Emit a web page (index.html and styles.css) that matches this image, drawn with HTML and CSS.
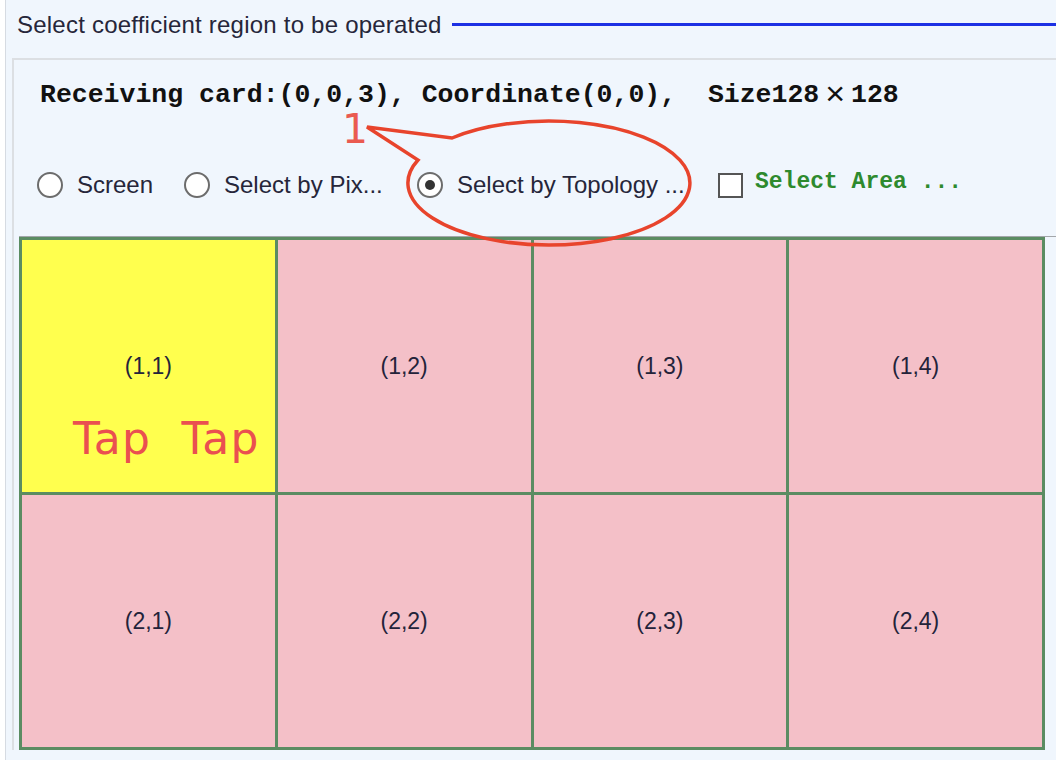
FILE: index.html
```html
<!DOCTYPE html>
<html lang="en">
<head>
<meta charset="utf-8">
<title>Coefficient region</title>
<link rel="stylesheet" href="styles.css">
</head>
<body>
<div class="frame">
  <div class="legend">
    <span class="legend-title">Select coefficient region to be operated</span>
    <span class="legend-rule"></span>
  </div>

  <div class="panel">
    <div class="info">Receiving card:(0,0,3), Coordinate(0,0),  Size128<span class="wide">×</span>128</div>

    <div class="options">
      <label class="opt"><span class="radio"></span><span class="opt-text">Screen</span></label>
      <label class="opt"><span class="radio"></span><span class="opt-text">Select by Pix...</span></label>
      <label class="opt"><span class="radio on"></span><span class="opt-text">Select by Topology ...</span></label>
      <label class="opt"><span class="box"></span><span class="area">Select Area ...</span></label>
    </div>

    <div class="topo">
      <div class="grid">
        <div class="cell picked">(1,1)<span class="tap">Tap  Tap</span></div>
        <div class="cell">(1,2)</div>
        <div class="cell">(1,3)</div>
        <div class="cell">(1,4)</div>
        <div class="cell">(2,1)</div>
        <div class="cell">(2,2)</div>
        <div class="cell">(2,3)</div>
        <div class="cell">(2,4)</div>
      </div>
    </div>
  </div>

  <svg class="callout" width="1056" height="760" viewBox="0 0 1056 760">
    <path d="M367 127 L452 138 A141 62 0 1 1 418 160 Z" fill="none" stroke="#e8442c" stroke-width="3.5" stroke-linejoin="miter"/>
    <text x="342" y="143" class="callout-num">1</text>
  </svg>
</div>
</body>
</html>
```

FILE: styles.css
```css
* {
  box-sizing: border-box;
}

html, body {
  margin: 0;
  padding: 0;
  background: #ffffff;
}

body {
  width: 1056px;
  height: 760px;
  overflow: hidden;
  font-family: "Liberation Sans", Arial, sans-serif;
  color: #222233;
}

.frame {
  position: relative;
  margin-left: 5px;
  height: 760px;
  border-left: 1px solid #d6dbe2;
  background: #f0f6fd;
}

/* group title with the rule running to the right */
.legend {
  display: flex;
  align-items: center;
  height: 50px;
  padding-left: 11px;
}

.legend-title {
  font-size: 24px;
  letter-spacing: 0.22px;
  color: #26263a;
  white-space: nowrap;
}

.legend-rule {
  flex: 1;
  height: 3px;
  margin-left: 10px;
  margin-top: -2px;
  background: #1c30e4;
}

.panel {
  margin-top: 8px;
  margin-left: 6px;
  border-top: 2px solid #dcdfe3;
  border-left: 2px solid #dcdfe3;
  padding-top: 19px;
}

.info {
  height: 32px;
  line-height: 32px;
  padding-left: 26px;
  font-family: "Liberation Mono", "Courier New", monospace;
  font-weight: bold;
  font-size: 26.5px;
  color: #111111;
  white-space: pre;
}

.info .wide {
  display: inline-block;
  width: 31.8px;
  text-align: center;
  font-family: "Liberation Sans", Arial, sans-serif;
  font-weight: normal;
  font-size: 34px;
  line-height: 0;
  vertical-align: -3px;
}

.options {
  display: grid;
  grid-template-columns: 147px 233px 301px auto;
  align-items: center;
  height: 40px;
  margin-top: 54px;
  padding-left: 23px;
}

.opt {
  display: flex;
  align-items: center;
  font-size: 24px;
  color: #26263a;
  white-space: nowrap;
}

.radio {
  flex: none;
  position: relative;
  width: 26px;
  height: 26px;
  margin-right: 14px;
  border: 2px solid #6c6c6c;
  border-radius: 50%;
  background: #ffffff;
}

.radio.on::after {
  content: "";
  position: absolute;
  left: 6px;
  top: 6px;
  width: 10px;
  height: 10px;
  border-radius: 50%;
  background: #333333;
}

.box {
  flex: none;
  width: 25px;
  height: 25px;
  margin-right: 12px;
  margin-top: 1px;
  border: 2px solid #555555;
  background: #ffffff;
}

.area {
  font-family: "Liberation Mono", "Courier New", monospace;
  font-weight: bold;
  font-size: 23px;
  color: #2e8a2e;
  margin-top: -6px;
}

.topo {
  margin-top: 31px;
  margin-left: 5px;
  border-top: 1px solid #a3a6aa;
}

.grid {
  display: grid;
  grid-template-columns: repeat(4, 1fr);
  grid-template-rows: repeat(2, 1fr);
  gap: 3px;
  padding: 3px;
  width: 1026px;
  height: 513px;
  background: #5b8c62;
}

.cell {
  position: relative;
  display: flex;
  align-items: center;
  justify-content: center;
  background: #f4c0c8;
  font-size: 23px;
  color: #23233a;
}

.cell.picked {
  background: #ffff4e;
}

.tap {
  position: absolute;
  left: 51px;
  top: 177px;
  font-family: "DejaVu Sans", sans-serif;
  font-size: 44px;
  letter-spacing: 1.2px;
  line-height: 1;
  color: #ea5050;
  white-space: pre;
}

.callout {
  position: absolute;
  left: -6px;
  top: 0;
  pointer-events: none;
}

.callout-num {
  font-family: "DejaVu Sans", sans-serif;
  font-size: 41px;
  fill: #ea5a50;
}
```
